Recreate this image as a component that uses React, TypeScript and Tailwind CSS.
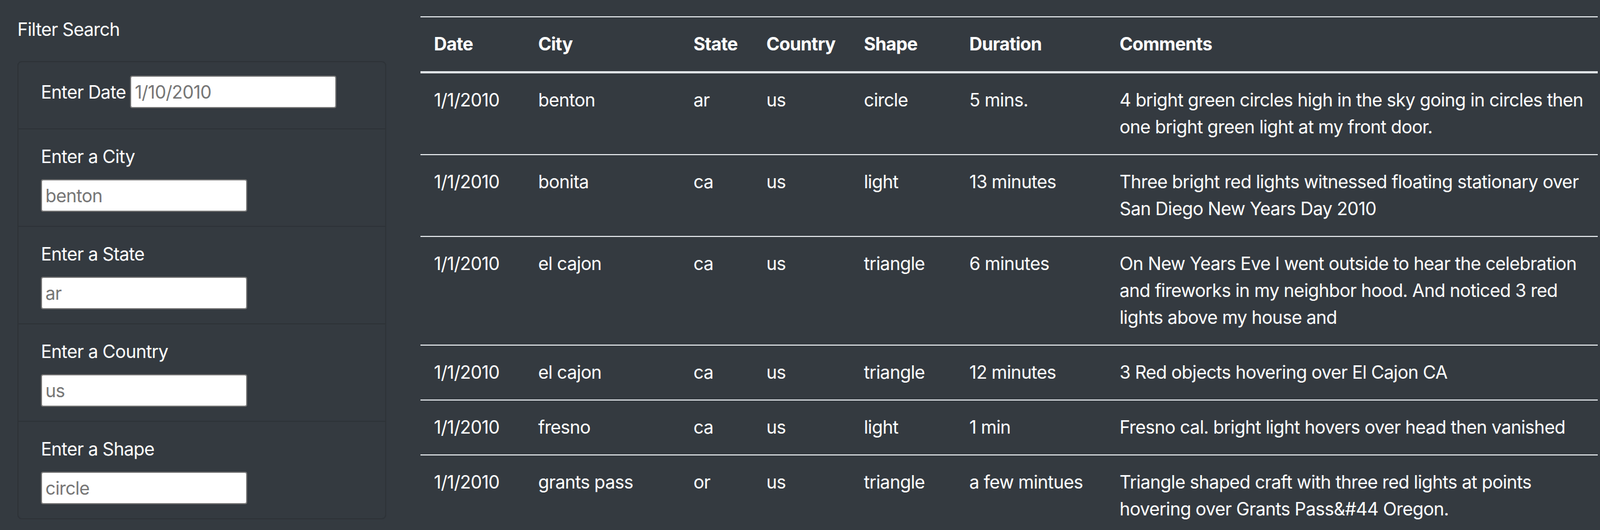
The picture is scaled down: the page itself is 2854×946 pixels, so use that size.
import React from "react";

const rows = [
  ["1/1/2010", "benton", "ar", "us", "circle", "5 mins.", "4 bright green circles high in the sky going in circles then one bright green light at my front door."],
  ["1/1/2010", "bonita", "ca", "us", "light", "13 minutes", "Three bright red lights witnessed floating stationary over San Diego New Years Day 2010"],
  ["1/1/2010", "el cajon", "ca", "us", "triangle", "6 minutes", "On New Years Eve I went outside to hear the celebration and fireworks in my neighbor hood. And noticed 3 red lights above my house and"],
  ["1/1/2010", "el cajon", "ca", "us", "triangle", "12 minutes", "3 Red objects hovering over El Cajon CA"],
  ["1/1/2010", "fresno", "ca", "us", "light", "1 min", "Fresno cal. bright light hovers over head then vanished"],
  ["1/1/2010", "grants pass", "or", "us", "triangle", "a few mintues", "Triangle shaped craft with three red lights at points hovering over Grants Pass&#44 Oregon."],
];

const headers = [
  { t: "Date", w: "w-[186px]" },
  { t: "City", w: "w-[277px]" },
  { t: "State", w: "w-[130px]" },
  { t: "Country", w: "w-[174px]" },
  { t: "Shape", w: "w-[188px]" },
  { t: "Duration", w: "w-[268px]" },
  { t: "Comments", w: "w-[877px]" },
];

function Field({ label, ph }: { label: string; ph: string }) {
  return (
    <div className="border-t-2 border-[#2e3338] px-[40px] py-[25px]">
      <div className="leading-[48px] mb-[16px]">{label}</div>
      <input
        className="block w-[368px] h-[58px] border-2 border-[#767676] rounded-[4px] bg-white px-[6px] text-[32px] leading-[48px] tracking-[-0.02em] text-black placeholder:text-[#757575] outline-none"
        placeholder={ph}
      />
    </div>
  );
}

export default function App() {
  return (
    <div className="min-h-screen bg-[#343a40] text-white font-['Inter',sans-serif] text-[32px] leading-[48px] tracking-[-0.02em] flex">
      <aside className="w-[750px] shrink-0 pl-[31px] pt-[29px]">
        <div className="leading-[48px]">Filter Search</div>
        <div className="mt-[32px] w-[658px] border-2 border-[#2e3338] rounded-[8px]">
          <div className="px-[40px] pt-[24px] pb-[36px] flex items-baseline gap-[8px]">
            <label className="leading-[48px]">Enter Date</label>
            <input
              className="block w-[368px] h-[58px] border-2 border-[#767676] rounded-[4px] bg-white px-[6px] text-[32px] leading-[48px] tracking-[-0.02em] text-black placeholder:text-[#757575] outline-none"
              placeholder="1/10/2010"
            />
          </div>
          <Field label="Enter a City" ph="benton" />
          <Field label="Enter a State" ph="ar" />
          <Field label="Enter a Country" ph="us" />
          <Field label="Enter a Shape" ph="circle" />
        </div>
      </aside>
      <main className="pt-[29px]">
        <table className="w-[2100px] table-fixed border-collapse">
          <thead>
            <tr>
              {headers.map((h) => (
                <th
                  key={h.t}
                  className={`${h.w} text-left font-bold p-[24px] leading-[48px] border-t-2 border-b-4 border-[#dee2e6] align-bottom`}
                >
                  {h.t}
                </th>
              ))}
            </tr>
          </thead>
          <tbody>
            {rows.map((r, i) => (
              <tr key={i}>
                {r.map((c, j) => (
                  <td key={j} className="p-[24px] leading-[48px] border-t-2 border-[#dee2e6] align-top">
                    {c}
                  </td>
                ))}
              </tr>
            ))}
          </tbody>
        </table>
      </main>
    </div>
  );
}
